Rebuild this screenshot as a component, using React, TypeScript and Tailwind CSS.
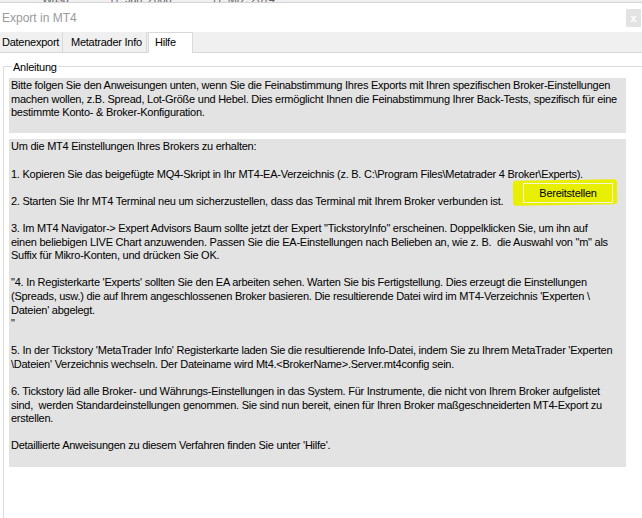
const INTRO = [
	"Bitte folgen Sie den Anweisungen unten, wenn Sie die Feinabstimmung Ihres Exports mit Ihren spezifischen Broker-Einstellungen",
	"machen wollen, z.B. Spread, Lot-Größe und Hebel. Dies ermöglicht Ihnen die Feinabstimmung Ihrer Back-Tests, spezifisch für eine",
	"bestimmte Konto- & Broker-Konfiguration.",
	"",
];

const STEPS = [
	"Um die MT4 Einstellungen Ihres Brokers zu erhalten:",
	"",
	"1. Kopieren Sie das beigefügte MQ4-Skript in Ihr MT4-EA-Verzeichnis (z. B. C:\\Program Files\\Metatrader 4 Broker\\Experts).",
	"",
	"2. Starten Sie Ihr MT4 Terminal neu um sicherzustellen, dass das Terminal mit Ihrem Broker verbunden ist.",
	"",
	'3. Im MT4 Navigator-> Expert Advisors Baum sollte jetzt der Expert "TickstoryInfo" erscheinen. Doppelklicken Sie, um ihn auf',
	'einen beliebigen LIVE Chart anzuwenden. Passen Sie die EA-Einstellungen nach Belieben an, wie z. B.  die Auswahl von "m" als',
	"Suffix für Mikro-Konten, und drücken Sie OK.",
	"",
	"\"4. In Registerkarte 'Experts' sollten Sie den EA arbeiten sehen. Warten Sie bis Fertigstellung. Dies erzeugt die Einstellungen",
	"(Spreads, usw.) die auf Ihrem angeschlossenen Broker basieren. Die resultierende Datei wird im MT4-Verzeichnis 'Experten \\",
	"Dateien' abgelegt.",
	'"',
	"",
	"5. In der Tickstory 'MetaTrader Info' Registerkarte laden Sie die resultierende Info-Datei, indem Sie zu Ihrem MetaTrader 'Experten",
	"\\Dateien' Verzeichnis wechseln. Der Dateiname wird Mt4.<BrokerName>.Server.mt4config sein.",
	"",
	"6. Tickstory läd alle Broker- und Währungs-Einstellungen in das System. Für Instrumente, die nicht von Ihrem Broker aufgelistet",
	"sind,  werden Standardeinstellungen genommen. Sie sind nun bereit, einen für Ihren Broker maßgeschneiderten MT4-Export zu",
	"erstellen.",
	"",
	"Detaillierte Anweisungen zu diesem Verfahren finden Sie unter 'Hilfe'.",
	"",
];

const TextBlock = ({ lines }: { lines: string[] }) => (
	<>
		{lines.map((line, i) => (
			<div key={i} className="h-[13.6px] whitespace-pre leading-[13.6px]">
				{line}
			</div>
		))}
	</>
);

export default function App() {
	return (
		<div className="relative h-[518px] w-[642px] overflow-hidden bg-white font-['Liberation_Sans',Arial,sans-serif] text-[11px] tracking-[-0.25px] text-black">
			{/* the window behind, only its bottom edge shows */}
			<div className="flex h-[3px] gap-[40px] overflow-hidden border-b border-[#d4d4d4] bg-[#f0f0f0] pl-[42px]">
				<span className="-mt-[9px] text-[#666]">Wasd</span>
				<span className="-mt-[9px] text-[#666]">11. Jan. 2008</span>
				<span className="-mt-[9px] text-[#666]">11. Mrz. 2014</span>
			</div>

			<div className="flex h-[29px] items-center justify-between">
				<span className="pl-[2px] text-[12px] tracking-normal text-[#9a9a9a]">Export in MT4</span>
				<div className="mr-px mt-[6px] flex h-[18px] w-[15px] items-center justify-center self-start bg-[#e3e3e3] text-[11px] font-bold text-white">
					x
				</div>
			</div>

			<div className="flex h-[21px] border-b border-[#d9d9d9] bg-[#f0f0f0]">
				<div className="flex w-[63px] items-end border-r border-[#d9d9d9] pb-[2px] pl-[2px]">Datenexport</div>
				<div className="flex w-[84px] items-end border-r border-[#d9d9d9] pb-[2px] pl-[8px]">Metatrader Info</div>
				<div className="-mb-px ml-px flex w-[45px] items-start border-x border-t border-[#d9d9d9] bg-white pl-[6px] pt-[1px]">
					Hilfe
				</div>
			</div>

			<div className="relative ml-[3px] mt-[13px] border-l border-t border-[#dcdcdc] pt-[11px]">
				<span className="absolute -top-[8px] left-[8px] bg-white px-px">Anleitung</span>

				<div className="ml-[5px] w-[617px] bg-[#e3e3e3] px-[2px] pt-px">
					<TextBlock lines={INTRO} />
				</div>

				<div className="relative ml-[5px] mt-[6px] w-[617px] bg-[#e3e3e3] px-[2px] pt-px">
					<TextBlock lines={STEPS} />

					<div className="absolute left-[504px] top-[41px] h-[25px] w-[104px] -rotate-1 rounded-[3px] bg-[#e8ef00]" />
					<div className="absolute left-[514px] top-[44px] flex h-[20px] w-[90px] items-center justify-center border border-[#f4f4d8]">
						Bereitstellen
					</div>
				</div>

				<div className="h-[60px]" />
			</div>
		</div>
	);
}
